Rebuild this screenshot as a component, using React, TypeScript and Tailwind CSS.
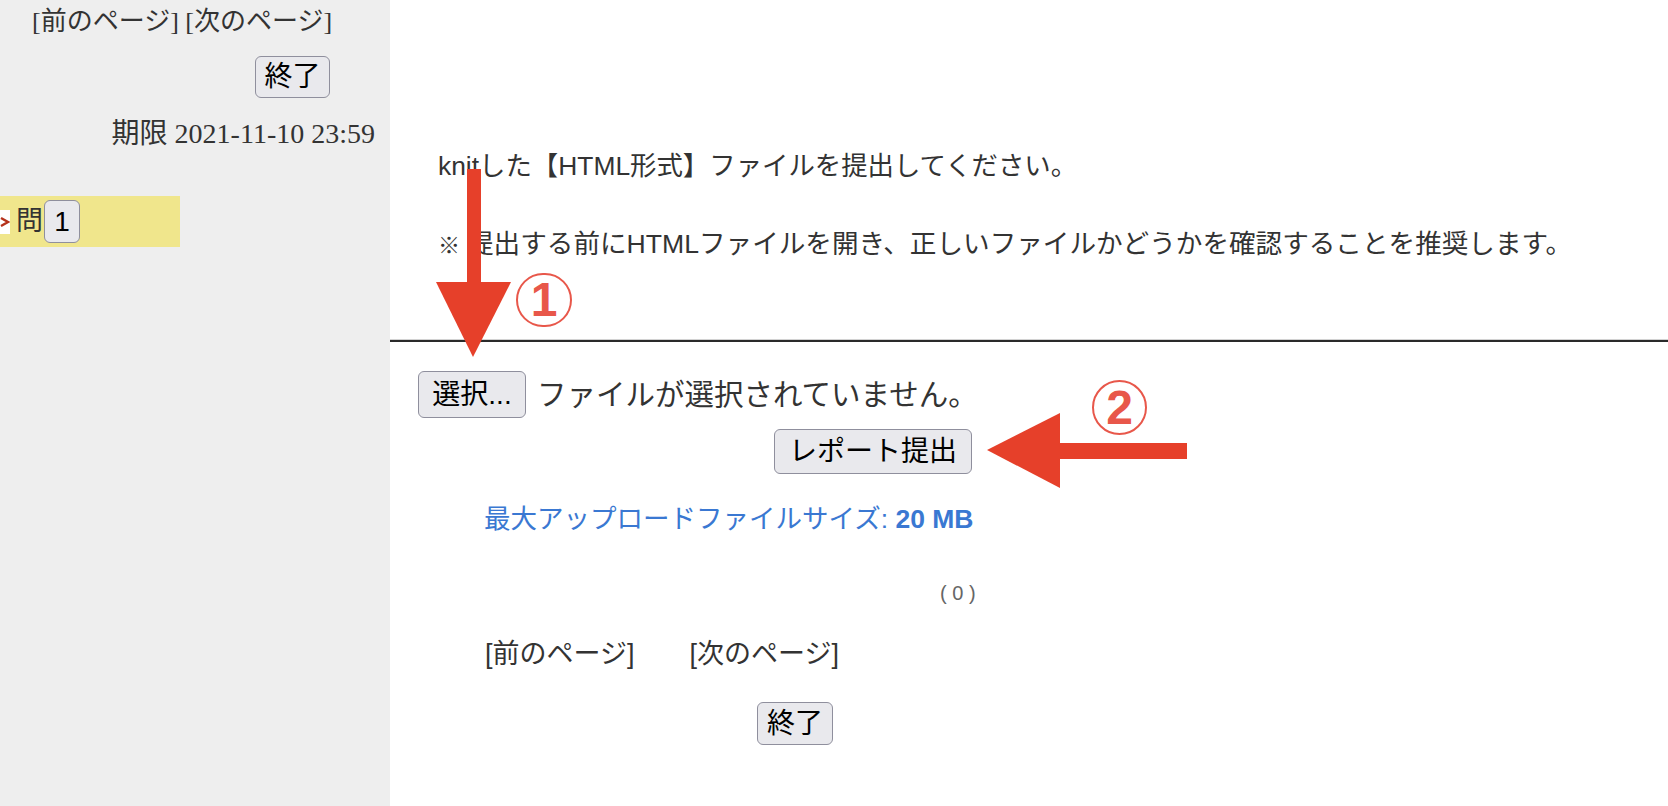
import React from "react";

function Btn({ label, className }: { label: string; className: string }) {
    return (
        <button
            className={`flex items-center justify-center rounded-[6px] border border-[#8f8f9d] bg-[#e9e9ed] text-[28px] leading-none text-black font-['Liberation_Sans','Noto_Sans_CJK_JP',sans-serif] ${className}`}
        >
            {label}
        </button>
    );
}

function Sidebar() {
    return (
        <div className="w-[390px] shrink-0 bg-[#eeeeee] text-[#333333] font-['Liberation_Serif','Noto_Sans_CJK_JP',serif]">
            <div className="pt-[6px] pl-[32px] text-[26px] leading-[32px] whitespace-nowrap">
                [前のページ] [次のページ]
            </div>
            <div className="mt-[18px] flex justify-end pr-[60px]">
                <Btn label="終了" className="h-[42px] w-[75px]" />
            </div>
            <div className="mt-[20px] pr-[15px] text-right text-[28px] leading-[32px] whitespace-nowrap">
                期限 2021-11-10 23:59
            </div>
            <div className="mt-[46px] flex h-[51px] w-[180px] items-center bg-[#f0e68c]">
                <div className="flex h-[24px] w-[10px] items-center bg-white">
                    <svg width="10" height="12" viewBox="0 0 10 12">
                        <path d="M1 2 L8 6 L1 10" fill="none" stroke="#b5321c" strokeWidth="2.4" />
                    </svg>
                </div>
                <span className="ml-[6px] text-[27px] leading-none">問</span>
                <Btn label="1" className="ml-[1px] h-[43px] w-[36px]" />
            </div>
        </div>
    );
}

function Annotations() {
    return (
        <div className="pointer-events-none absolute inset-0">
            <svg className="absolute left-0 top-0" width="1668" height="806">
                <rect x="467" y="169" width="14" height="115" fill="#e6402a" />
                <polygon points="436,282 511,282 473,357" fill="#e6402a" />
                <rect x="1058" y="443" width="129" height="16" fill="#e6402a" />
                <polygon points="987,450 1060,413 1060,488" fill="#e6402a" />
            </svg>
            <div className="absolute left-[516px] top-[273px] flex h-[54px] w-[56px] items-center justify-center rounded-full border-2 border-[#e8574a] text-[48px] font-bold leading-none text-[#e8574a] font-['Liberation_Sans',sans-serif]">
                1
            </div>
            <div className="absolute left-[1092px] top-[380px] flex h-[55px] w-[55px] items-center justify-center rounded-full border-2 border-[#e8574a] text-[48px] font-bold leading-none text-[#e8574a] font-['Liberation_Sans',sans-serif]">
                2
            </div>
        </div>
    );
}

export default function App() {
    return (
        <div className="relative flex h-[806px] w-full overflow-hidden bg-white">
            <Sidebar />
            <div className="flex flex-1 flex-col text-[#333333] font-['Liberation_Sans','Noto_Sans_CJK_JP',sans-serif]">
                <p className="pt-[150px] pl-[48px] text-[26.4px] leading-[32px] whitespace-nowrap">
                    knitした【HTML形式】ファイルを提出してください。
                </p>
                <p className="mt-[46px] h-[32px] pl-[48px] text-[26.6px] leading-[32px] whitespace-nowrap">
                    <span className="mr-[7px] text-[22px] leading-none font-bold">※</span>提出する前にHTMLファイルを開き、正しいファイルかどうかを確認することを推奨します。
                </p>
                <div className="mt-[79px] h-[1px] bg-[#d2d2d2]" />
                <div className="h-[2px] bg-[#2a2a2a]" />
                <div className="mt-[29px] flex items-center pl-[28px]">
                    <Btn label="選択..." className="h-[47px] w-[108px]" />
                    <span className="ml-[11px] text-[29.5px] leading-none">ファイルが選択されていません。</span>
                </div>
                <div className="mt-[11px] pl-[384px]">
                    <Btn label="レポート提出" className="h-[45px] w-[198px]" />
                </div>
                <div className="mt-[29px] pl-[94px] text-[26.5px] leading-[32px] text-[#3a78d2] whitespace-nowrap">
                    最大アップロードファイルサイズ: <span className="font-bold">20 MB</span>
                </div>
                <div className="mt-[46px] pl-[550px] text-[20px] leading-[24px] text-[#666666]">( 0 )</div>
                <div className="mt-[33px] flex pl-[95px] text-[27px] leading-[32px] whitespace-nowrap">
                    <span>[前のページ]</span>
                    <span className="ml-[55px]">[次のページ]</span>
                </div>
                <div className="mt-[32px] pl-[367px]">
                    <Btn label="終了" className="h-[43px] w-[76px]" />
                </div>
            </div>
            <Annotations />
        </div>
    );
}
